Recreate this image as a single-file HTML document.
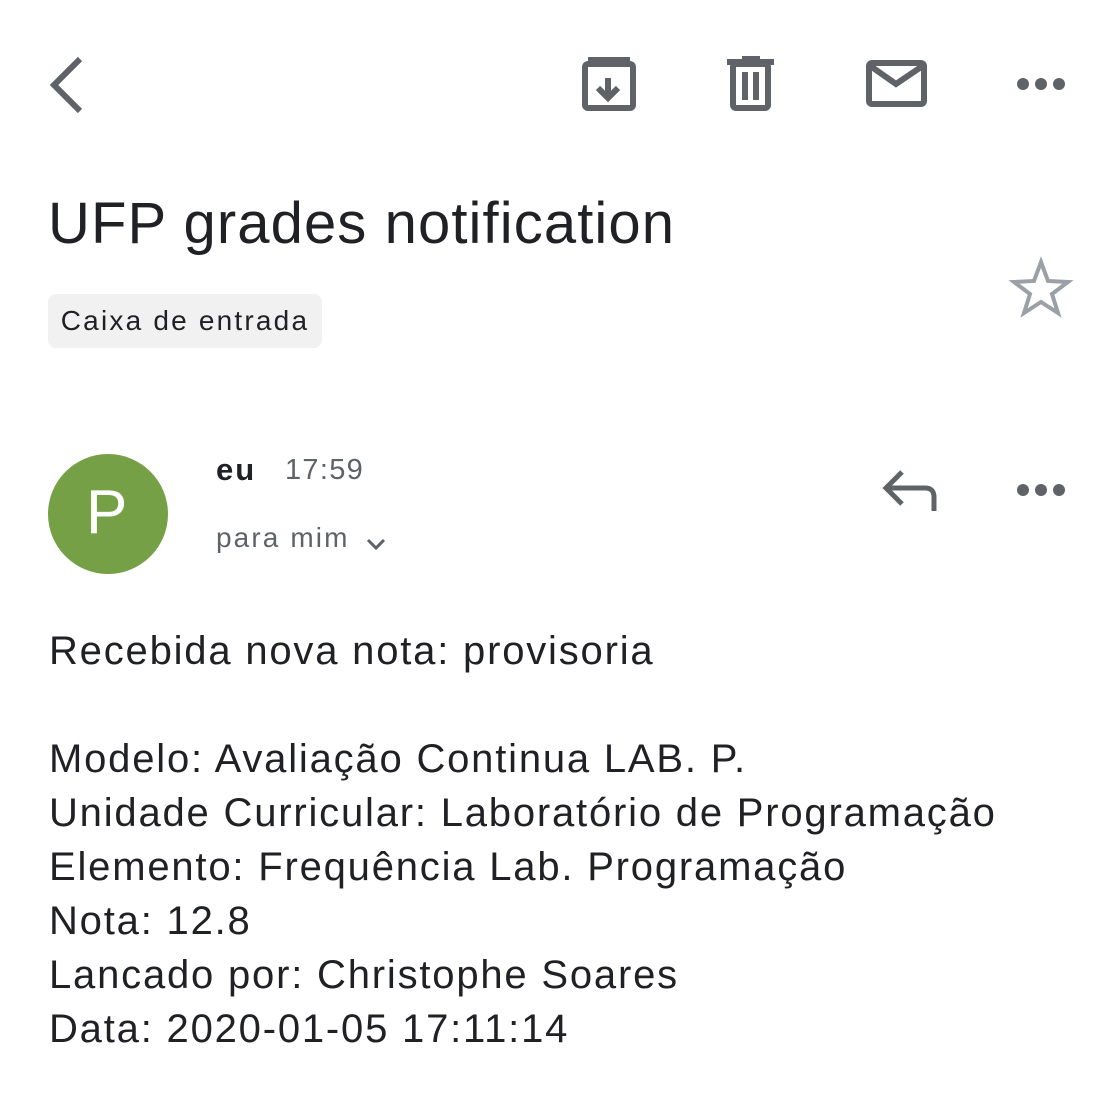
<!DOCTYPE html>
<html><head><meta charset="utf-8"><style>
body{margin:0;width:1112px;height:1113px;background:#fff;position:relative;overflow:hidden;font-family:"Liberation Sans",sans-serif;color:#202124}
.a{position:absolute;white-space:nowrap}
</style></head><body>
<svg class="a" style="left:0;top:0" width="1112" height="1113" fill="none">
<path d="M80 59 L54 85 L80 111" stroke="#5f6368" stroke-width="6"/>
<rect x="585" y="64" width="48" height="44" rx="3" stroke="#5f6368" stroke-width="6"/>
<path d="M588 60 L630 60" stroke="#5f6368" stroke-width="6"/>
<path d="M608 78 V97 M598 88 L608 98 L618 88" stroke="#5f6368" stroke-width="6"/>
<path d="M727 62 H774 M742 59 H760" stroke="#5f6368" stroke-width="6"/>
<rect x="733" y="64" width="35" height="44" rx="3" stroke="#5f6368" stroke-width="6"/>
<path d="M745 72 V100 M756 72 V100" stroke="#5f6368" stroke-width="6"/>
<rect x="869" y="63" width="55" height="41" rx="3" stroke="#5f6368" stroke-width="6"/>
<path d="M869 65 L896 84 L924 65" stroke="#5f6368" stroke-width="6"/>
<g fill="#5f6368"><circle cx="1023" cy="84" r="6"/><circle cx="1041" cy="84" r="6"/><circle cx="1059" cy="84" r="6"/>
<circle cx="1023" cy="490" r="6"/><circle cx="1041" cy="490" r="6"/><circle cx="1059" cy="490" r="6"/></g>
<path d="M1041 262 L1048 281 L1068 282 L1052 294 L1058 313 L1041 302 L1024 313 L1030 294 L1014 282 L1034 281 Z" stroke="#9aa0a6" stroke-width="4" stroke-linejoin="miter"/>
<path d="M902 472 L886 488 L902 504 M886 488 H925 Q934 488 934 497 V511" stroke="#5f6368" stroke-width="5"/>
<path d="M368 540 L376 548 L384 540" stroke="#5f6368" stroke-width="3"/>
<circle cx="108" cy="514" r="60" fill="#76a046"/>
</svg>
<div class="a" style="left:48px;top:190px;font-size:58px;color:#202124;letter-spacing:1.1px">UFP grades notification</div>
<div class="a" style="left:48px;top:294px;width:274px;height:54px;background:#f1f1f1;border-radius:8px;font-size:28px;line-height:54px;text-align:center;letter-spacing:2.2px">Caixa de entrada</div>
<div class="a" style="left:86px;top:478px;font-size:62px;color:#fff;line-height:70px">P</div>
<div class="a" style="left:216px;top:452px;font-size:31px;font-weight:bold;letter-spacing:2px">eu</div>
<div class="a" style="left:285px;top:454px;font-size:29px;color:#5f6368;letter-spacing:1.3px">17:59</div>
<div class="a" style="left:216px;top:522px;font-size:28px;color:#5f6368;letter-spacing:2.1px">para mim</div>
<div class="a" style="left:49px;top:624px;font-size:40px;line-height:54px;letter-spacing:1.8px">Recebida nova nota: provisoria<br><br>Modelo: Avaliação Continua LAB. P.<br>Unidade Curricular: Laboratório de Programação<br>Elemento: Frequência Lab. Programação<br>Nota: 12.8<br>Lancado por: Christophe Soares<br>Data: 2020-01-05 17:11:14</div>
</body></html>
